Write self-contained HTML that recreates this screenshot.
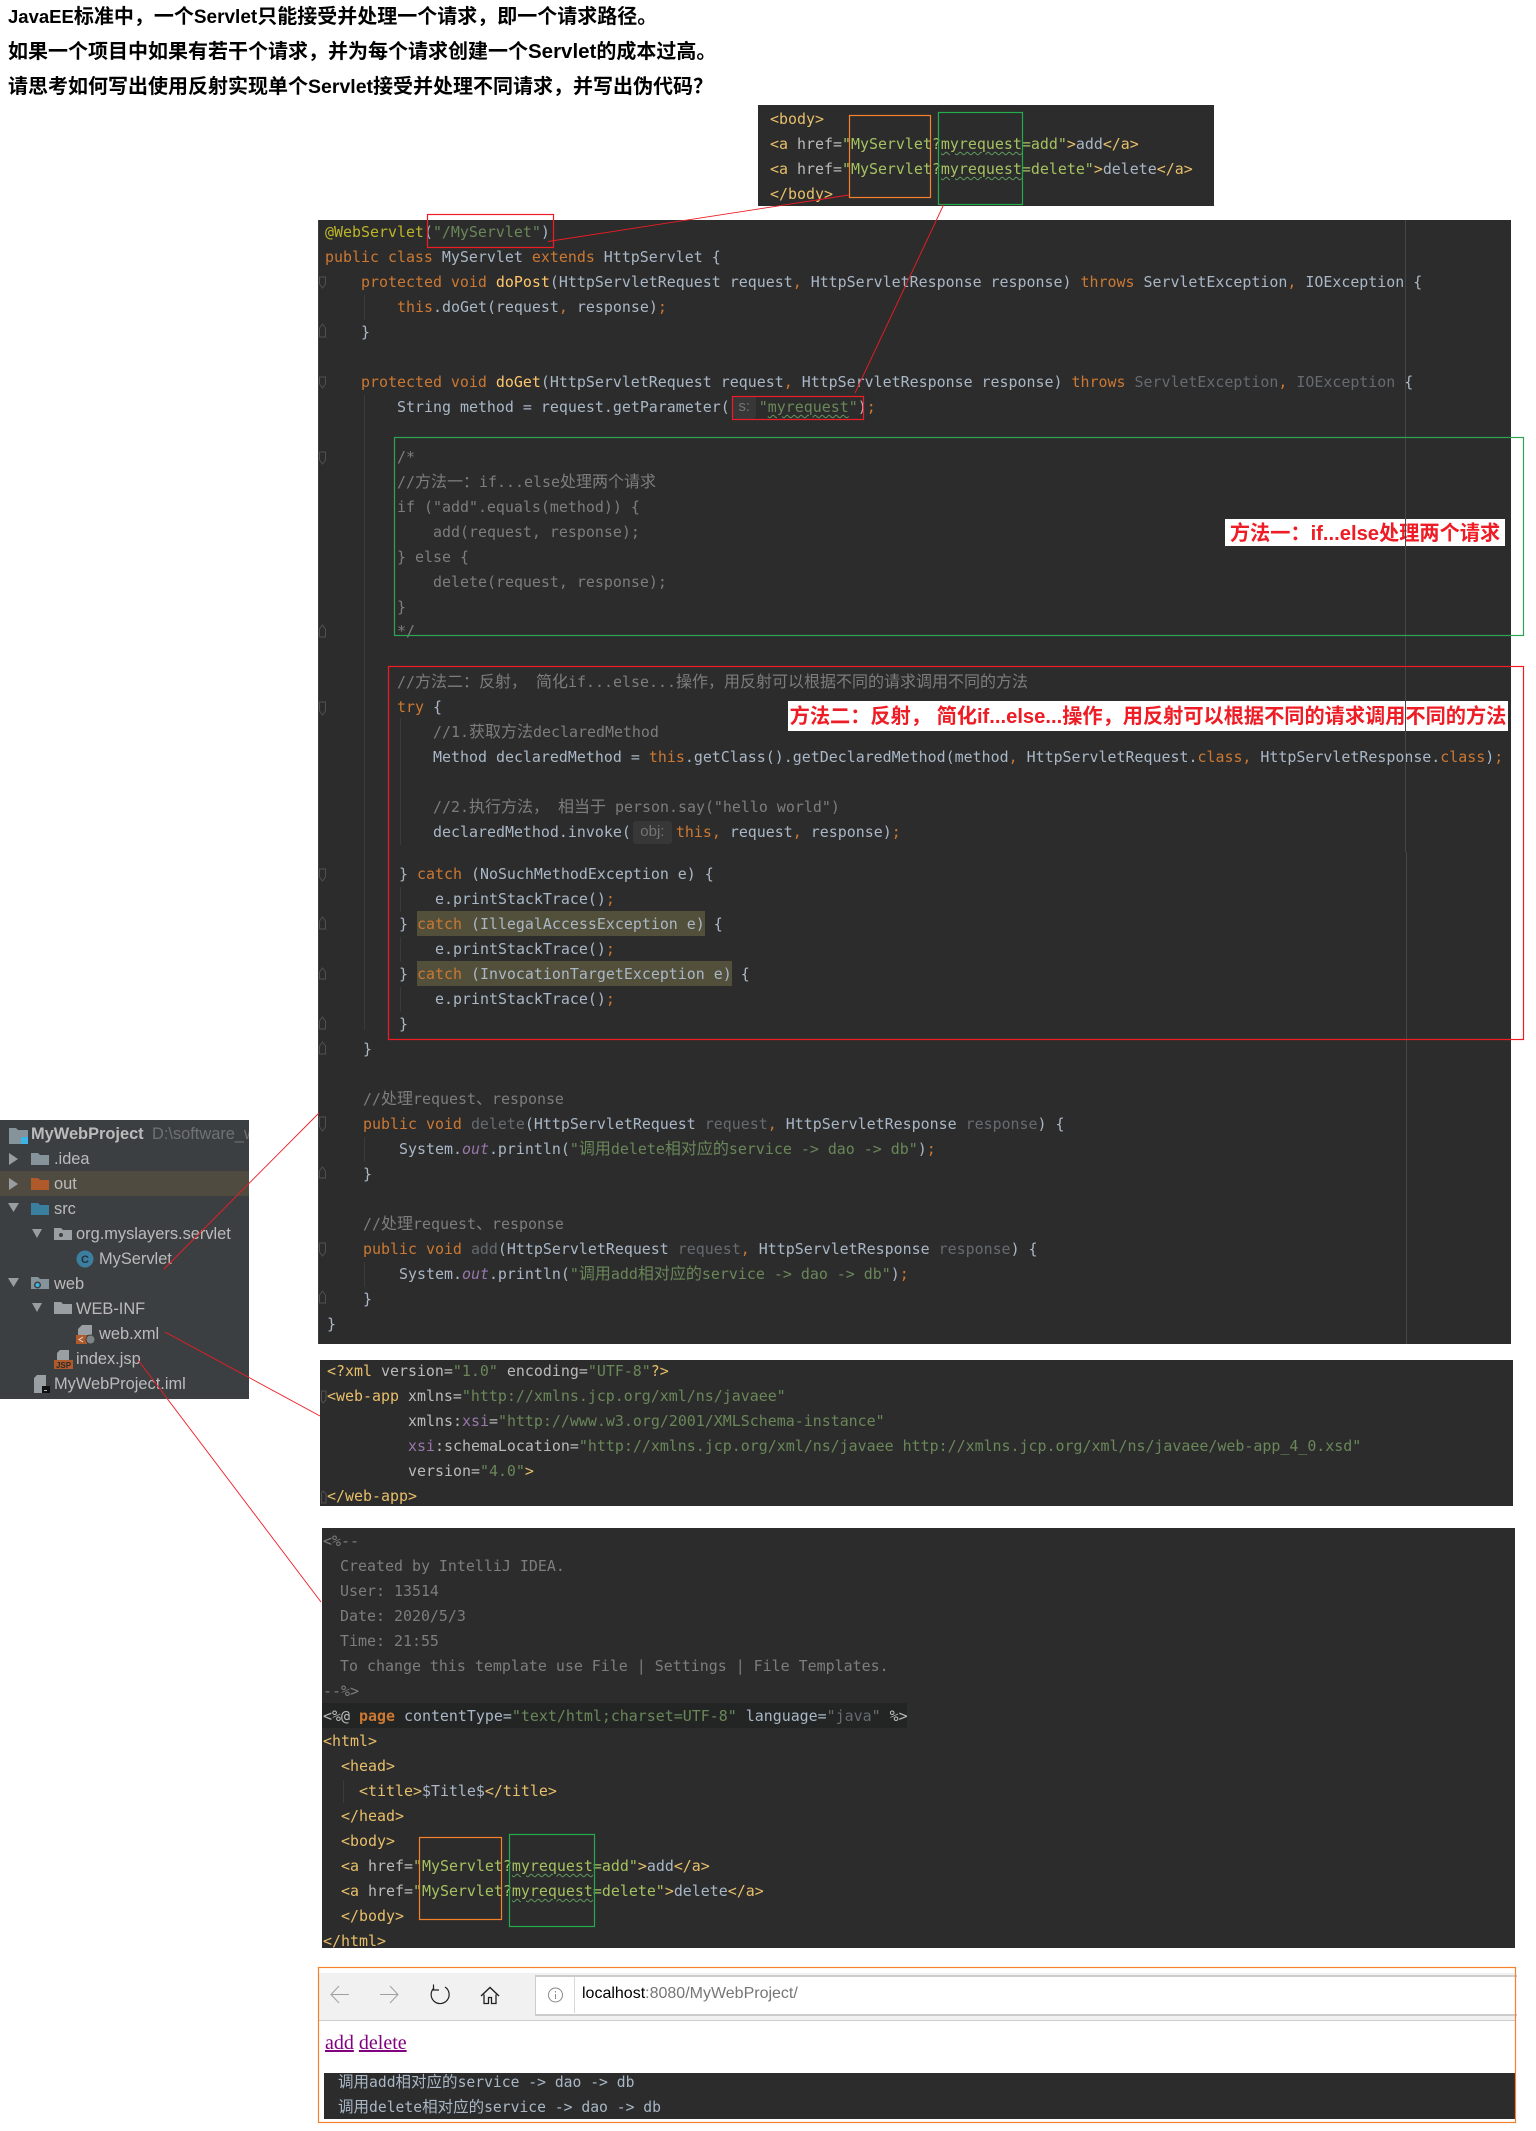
<!DOCTYPE html>
<html lang="zh"><head><meta charset="utf-8"><title>Servlet</title>
<style>
html,body{margin:0;padding:0;background:#fff}
body{position:relative;width:1536px;height:2131px;overflow:hidden}
.p{position:absolute;background:#2c2c2c}
.l{position:absolute;white-space:pre;height:25px;line-height:25px;font-family:"DejaVu Sans Mono","Noto Sans CJK SC",monospace;font-size:14.95px;color:#a9b7c6}
.c{font-family:"Noto Sans CJK SC",sans-serif;font-size:16px;line-height:0}
.k{color:#cc7832}.s{color:#6a8759}.a{color:#bbb529}.m{color:#ffc66d}.g,.g *{color:#7d7d7d}.u{color:#666b70}
.t{color:#e8bf6a}.b{color:#bababa}.v{color:#a5c261}.x{color:#9876aa}.i{font-style:italic;color:#9876aa}
.w{text-decoration:underline wavy #5f9a5f;text-decoration-thickness:.6px;text-underline-offset:1.5px}
.h{display:inline-block;box-sizing:border-box;height:23px;line-height:21px;background:#373737;border-radius:3px;color:#747474;font-family:"Liberation Sans",sans-serif;font-size:15px;text-align:center;vertical-align:top;margin:1px 3px 0 3px}
.hd{position:absolute;left:8px;white-space:pre;font:bold 20px/30px "Liberation Sans","Noto Sans CJK SC",sans-serif;color:#000}
.hd span{font-size:19px}
.lb{position:absolute;background:#fff;color:#ee1c25;font:bold 20.2px/28px "Liberation Sans","Noto Sans CJK SC",sans-serif;white-space:pre;text-align:center}
.r{position:absolute;left:0;white-space:pre;font:16.4px/25px "Liberation Sans",sans-serif;color:#bbb}
.hl{position:absolute;background:#524f3a}
</style></head><body>

<div class="hd" style="top:2px"><span style="font-size:18.5px">JavaEE</span>标准中，一个<span>Servlet</span>只能接受并处理一个请求，即一个请求路径。</div>
<div class="hd" style="top:37px">如果一个项目中如果有若干个请求，并为每个请求创建一个<span style="font-size:20.5px">Servlet</span>的成本过高。</div>
<div class="hd" style="top:72px">请思考如何写出使用反射实现单个<span style="font-size:19.5px">Servlet</span>接受并处理不同请求，并写出伪代码？</div>

<!-- top html panel -->
<div class="p" style="left:758px;top:105px;width:456px;height:101px"></div>
<div class="l t" style="left:770px;top:107px">&lt;body&gt;</div>
<div class="l" style="left:770px;top:132px"><span class="t">&lt;a</span> <span class="b">href=</span><span class="v">"MyServlet?<span class="w">myrequest</span>=add"</span><span class="t">&gt;</span>add<span class="t">&lt;/a&gt;</span></div>
<div class="l" style="left:770px;top:157px"><span class="t">&lt;a</span> <span class="b">href=</span><span class="v">"MyServlet?<span class="w">myrequest</span>=delete"</span><span class="t">&gt;</span>delete<span class="t">&lt;/a&gt;</span></div>
<div class="l t" style="left:770px;top:182px">&lt;/body&gt;</div>

<!-- main code panel -->
<div class="p" style="left:318px;top:220px;width:1193px;height:1124px"></div>
<div class="hl" style="left:417px;top:911px;width:288px;height:25px"></div>
<div class="hl" style="left:417px;top:961px;width:315px;height:25px"></div>

<div class="l" style="left:325px;top:220px"><span class="a">@WebServlet</span>(<span class="s">"/MyServlet"</span>)</div>
<div class="l" style="left:325px;top:245px"><span class="k">public class</span> MyServlet <span class="k">extends</span> HttpServlet {</div>
<div class="l" style="left:361px;top:270px"><span class="k">protected void</span> <span class="m">doPost</span>(HttpServletRequest request<span class="k">,</span> HttpServletResponse response) <span class="k">throws</span> ServletException<span class="k">,</span> IOException {</div>
<div class="l" style="left:397px;top:295px"><span class="k">this</span>.doGet(request<span class="k">,</span> response)<span class="k">;</span></div>
<div class="l" style="left:361px;top:320px">}</div>
<div class="l" style="left:361px;top:370px"><span class="k">protected void</span> <span class="m">doGet</span>(HttpServletRequest request<span class="k">,</span> HttpServletResponse response) <span class="k">throws</span> <span class="u">ServletException</span><span class="k">,</span> <span class="u">IOException</span> {</div>
<div class="l" style="left:397px;top:395px">String method = request.getParameter(<span class="h" style="width:23px">s:</span><span class="s">"<span class="w">myrequest</span>"</span>)<span class="k">;</span></div>

<div class="l g" style="left:397px;top:445px">/*</div>
<div class="l g" style="left:397px;top:470px">//<span class="c">方法一：</span>if...else<span class="c">处理两个请求</span></div>
<div class="l g" style="left:397px;top:495px">if ("add".equals(method)) {</div>
<div class="l g" style="left:433px;top:520px">add(request, response);</div>
<div class="l g" style="left:397px;top:545px">} else {</div>
<div class="l g" style="left:433px;top:570px">delete(request, response);</div>
<div class="l g" style="left:397px;top:595px">}</div>
<div class="l g" style="left:397px;top:619px">*/</div>

<div class="l g" style="left:397px;top:670px">//<span class="c">方法二：反射，</span> <span class="c">简化</span>if...else...<span class="c">操作，用反射可以根据不同的请求调用不同的方法</span></div>
<div class="l" style="left:397px;top:695px"><span class="k">try</span> {</div>
<div class="l g" style="left:433px;top:720px">//1.<span class="c">获取方法</span>declaredMethod</div>
<div class="l" style="left:433px;top:745px">Method declaredMethod = <span class="k">this</span>.getClass().getDeclaredMethod(method<span class="k">,</span> HttpServletRequest.<span class="k">class,</span> HttpServletResponse.<span class="k">class</span>)<span class="k">;</span></div>
<div class="l g" style="left:433px;top:795px">//2.<span class="c">执行方法，</span> <span class="c">相当于</span> person.say("hello world")</div>
<div class="l" style="left:433px;top:820px">declaredMethod.invoke(<span class="h" style="width:39px;margin:1px 4px 0 2px">obj:</span><span class="k">this,</span> request<span class="k">,</span> response)<span class="k">;</span></div>

<div class="l" style="left:399px;top:862px">} <span class="k">catch</span> (NoSuchMethodException e) {</div>
<div class="l" style="left:435px;top:887px">e.printStackTrace()<span class="k">;</span></div>
<div class="l" style="left:399px;top:912px">} <span class="k">catch</span> (IllegalAccessException e) {</div>
<div class="l" style="left:435px;top:937px">e.printStackTrace()<span class="k">;</span></div>
<div class="l" style="left:399px;top:962px">} <span class="k">catch</span> (InvocationTargetException e) {</div>
<div class="l" style="left:435px;top:987px">e.printStackTrace()<span class="k">;</span></div>
<div class="l" style="left:399px;top:1012px">}</div>
<div class="l" style="left:363px;top:1037px">}</div>

<div class="l g" style="left:363px;top:1087px">//<span class="c">处理</span>request<span class="c">、</span>response</div>
<div class="l" style="left:363px;top:1112px"><span class="k">public void</span> <span class="u">delete</span>(HttpServletRequest <span class="u">request</span><span class="k">,</span> HttpServletResponse <span class="u">response</span>) {</div>
<div class="l" style="left:399px;top:1137px">System.<span class="i">out</span>.println(<span class="s">"<span class="c">调用</span>delete<span class="c">相对应的</span>service -&gt; dao -&gt; db"</span>)<span class="k">;</span></div>
<div class="l" style="left:363px;top:1162px">}</div>
<div class="l g" style="left:363px;top:1212px">//<span class="c">处理</span>request<span class="c">、</span>response</div>
<div class="l" style="left:363px;top:1237px"><span class="k">public void</span> <span class="u">add</span>(HttpServletRequest <span class="u">request</span><span class="k">,</span> HttpServletResponse <span class="u">response</span>) {</div>
<div class="l" style="left:399px;top:1262px">System.<span class="i">out</span>.println(<span class="s">"<span class="c">调用</span>add<span class="c">相对应的</span>service -&gt; dao -&gt; db"</span>)<span class="k">;</span></div>
<div class="l" style="left:363px;top:1287px">}</div>
<div class="l" style="left:327px;top:1312px">}</div>

<div class="lb" style="left:1225px;top:519px;width:280px;height:27px;line-height:30px">方法一：if...else处理两个请求</div>
<div class="lb" style="left:788px;top:701px;width:720px;height:30px;line-height:32px">方法二：反射， 简化if...else...操作，用反射可以根据不同的请求调用不同的方法</div>

<!-- xml panel -->
<div class="p" style="left:320px;top:1360px;width:1193px;height:146px"></div>
<div class="l" style="left:327px;top:1359px"><span class="t">&lt;?xml</span> <span class="b">version=</span><span class="s">"1.0"</span> <span class="b">encoding=</span><span class="s">"UTF-8"</span><span class="t">?&gt;</span></div>
<div class="l" style="left:327px;top:1384px"><span class="t">&lt;web-app</span> <span class="b">xmlns=</span><span class="s">"http://xmlns.jcp.org/xml/ns/javaee"</span></div>
<div class="l" style="left:408px;top:1409px"><span class="b">xmlns:</span><span class="x">xsi</span><span class="b">=</span><span class="s">"http://www.w3.org/2001/XMLSchema-instance"</span></div>
<div class="l" style="left:408px;top:1434px"><span class="x">xsi</span><span class="b">:schemaLocation=</span><span class="s">"http://xmlns.jcp.org/xml/ns/javaee http://xmlns.jcp.org/xml/ns/javaee/web-app_4_0.xsd"</span></div>
<div class="l" style="left:408px;top:1459px"><span class="b">version=</span><span class="s">"4.0"</span><span class="t">&gt;</span></div>
<div class="l t" style="left:327px;top:1484px">&lt;/web-app&gt;</div>

<!-- jsp panel -->
<div class="p" style="left:322px;top:1528px;width:1193px;height:420px"></div>
<div style="position:absolute;left:322px;top:1703px;width:585px;height:25px;background:#232525"></div>
<div class="l g" style="left:323px;top:1529px">&lt;%--</div>
<div class="l g" style="left:340px;top:1554px">Created by IntelliJ IDEA.</div>
<div class="l g" style="left:340px;top:1579px">User: 13514</div>
<div class="l g" style="left:340px;top:1604px">Date: 2020/5/3</div>
<div class="l g" style="left:340px;top:1629px">Time: 21:55</div>
<div class="l g" style="left:340px;top:1654px">To change this template use File | Settings | File Templates.</div>
<div class="l g" style="left:323px;top:1679px">--%&gt;</div>
<div class="l" style="left:323px;top:1704px"><span class="b">&lt;%@</span> <b class="k">page</b> contentType=<span class="s">"text/html;charset=UTF-8"</span> language=<span class="u">"java"</span> <span class="b">%&gt;</span></div>
<div class="l t" style="left:323px;top:1729px">&lt;html&gt;</div>
<div class="l t" style="left:341px;top:1754px">&lt;head&gt;</div>
<div class="l" style="left:359px;top:1779px"><span class="t">&lt;title&gt;</span>$Title$<span class="t">&lt;/title&gt;</span></div>
<div class="l t" style="left:341px;top:1804px">&lt;/head&gt;</div>
<div class="l t" style="left:341px;top:1829px">&lt;body&gt;</div>
<div class="l" style="left:341px;top:1854px"><span class="t">&lt;a</span> <span class="b">href=</span><span class="v">"MyServlet?<span class="w">myrequest</span>=add"</span><span class="t">&gt;</span>add<span class="t">&lt;/a&gt;</span></div>
<div class="l" style="left:341px;top:1879px"><span class="t">&lt;a</span> <span class="b">href=</span><span class="v">"MyServlet?<span class="w">myrequest</span>=delete"</span><span class="t">&gt;</span>delete<span class="t">&lt;/a&gt;</span></div>
<div class="l t" style="left:341px;top:1904px">&lt;/body&gt;</div>
<div class="l t" style="left:323px;top:1929px">&lt;/html&gt;</div>

<!-- browser -->
<div style="position:absolute;left:319px;top:1973px;width:1197px;height:47px;background:#f1f1f1;border-bottom:1px solid #ccc"></div>
<div style="position:absolute;left:535px;top:1975px;width:981px;height:37px;background:#fff;border:1px solid #ccc;border-right:0;border-width:2px 0 2px 1px"></div>
<div style="position:absolute;left:574px;top:1977px;width:1px;height:36px;background:#d8d8d8"></div>
<div style="position:absolute;left:582px;top:1982px;white-space:pre;font:16px/24px 'Liberation Sans',sans-serif;color:#767676"><span style="color:#000">localhost</span>:8080/MyWebProject/</div>
<div style="position:absolute;left:325px;top:2031px;white-space:pre;font:20px/24px 'Liberation Serif',serif;color:#800080"><span style="text-decoration:underline">add</span> <span style="text-decoration:underline">delete</span></div>
<div class="p" style="left:324px;top:2073px;width:1191px;height:46px"></div>
<div class="l" style="left:338px;top:2070px;font-size:14.7px"><span class="c" style="font-size:15.5px">调用</span>add<span class="c" style="font-size:15.5px">相对应的</span>service -&gt; dao -&gt; db</div>
<div class="l" style="left:338px;top:2095px;font-size:14.7px"><span class="c" style="font-size:15.5px">调用</span>delete<span class="c" style="font-size:15.5px">相对应的</span>service -&gt; dao -&gt; db</div>

<!-- project tree -->
<div style="position:absolute;left:0;top:1120px;width:249px;height:279px;background:#3c3f41;overflow:hidden">
<div style="position:absolute;left:0;top:51px;width:249px;height:25px;background:#4f4b41"></div>
<div class="r" style="left:31px;top:2px;color:#bbb"><b>MyWebProject</b></div>
<div class="r" style="left:152px;top:2px;color:#6f7274">D:\software_workspace</div>
<div class="r" style="left:54px;top:27px">.idea</div>
<div class="r" style="left:54px;top:52px">out</div>
<div class="r" style="left:54px;top:77px">src</div>
<div class="r" style="left:76px;top:102px">org.myslayers.servlet</div>
<div class="r" style="left:99px;top:127px">MyServlet</div>
<div class="r" style="left:54px;top:152px">web</div>
<div class="r" style="left:76px;top:177px">WEB-INF</div>
<div class="r" style="left:99px;top:202px">web.xml</div>
<div class="r" style="left:76px;top:227px">index.jsp</div>
<div class="r" style="left:54px;top:252px">MyWebProject.iml</div>
</div>

<!-- overlay: icons, guides, boxes, lines -->
<svg style="position:absolute;left:0;top:0" width="1536" height="2131" viewBox="0 0 1536 2131" fill="none" shape-rendering="auto">
<!-- margin + guides -->
<path d="M1405.5 220V852M1406.5 852V1344" stroke="#464646"/>
<path d="M364.5 295V320M364.5 395V1030M364.5 1137V1162M364.5 1262V1287M400.5 718V845M400.5 887V912M400.5 937V962M400.5 987V1012M343.5 1780V1803" stroke="#3a3a3a"/>
<path d="M318.5 220V1344" stroke="#3d3d3d"/>
<!-- fold markers -->
<g stroke="#505050">
<path d="M319.5 277H325.5V284L322.5 288L319.5 284Z"/>
<path d="M319.5 337H325.5V328L322.5 324L319.5 328Z"/>
<path d="M319.5 377H325.5V384L322.5 388L319.5 384Z"/>
<path d="M319.5 452H325.5V460L322.5 464L319.5 460Z"/>
<path d="M319.5 637H325.5V629L322.5 625L319.5 629Z"/>
<path d="M319.5 702H325.5V711L322.5 715L319.5 711Z"/>
<path d="M319.5 869H325.5V877L322.5 881L319.5 877Z"/>
<path d="M319.5 929H325.5V921L322.5 917L319.5 921Z"/>
<path d="M319.5 979H325.5V972L322.5 968L319.5 972Z"/>
<path d="M319.5 1029H325.5V1021L322.5 1017L319.5 1021Z"/>
<path d="M319.5 1054H325.5V1046L322.5 1042L319.5 1046Z"/>
<path d="M319.5 1117H325.5V1127L322.5 1131L319.5 1127Z"/>
<path d="M319.5 1178H325.5V1171L322.5 1167L319.5 1171Z"/>
<path d="M319.5 1243H325.5V1252L322.5 1256L319.5 1252Z"/>
<path d="M319.5 1303H325.5V1295L322.5 1291L319.5 1295Z"/>
<path d="M321.5 1391H326V1400L323 1403L321.5 1401Z"/>
<path d="M321.5 1503H326V1494L323 1491L321.5 1493Z"/>
</g>

<!-- tree icons -->
<path d="M9 1128H16L18 1130H28V1137H21V1144H9Z" fill="#87939a"/><rect x="21" y="1137" width="7" height="7" fill="#3cb4e6"/>
<g fill="#9a9d9f">
<path d="M9 1153L18 1159L9 1165Z"/><path d="M9 1178L18 1184L9 1190Z"/>
<path d="M8 1203H19L13.5 1212Z"/><path d="M32 1229H42L37 1238Z"/>
<path d="M8 1278H19L13.5 1287Z"/><path d="M32 1303H42L37 1312Z"/>
</g>
<path d="M31 1153H38L40 1155H49V1165H31Z" fill="#87939a"/>
<path d="M31 1178H38L40 1180H49V1190H31Z" fill="#b0592b"/>
<path d="M31 1203H38L40 1205H49V1215H31Z" fill="#3b7f9f"/>
<path d="M54 1228H61L63 1230H72V1240H54Z" fill="#9a9fa3"/><circle cx="61" cy="1235" r="2" fill="#3c3f41"/>
<path d="M31 1277H38L40 1279H49V1289H31Z" fill="#87939a"/><circle cx="37.5" cy="1285" r="3.5" fill="#3c3f41"/><circle cx="37.5" cy="1285" r="2" fill="#3cb4e6"/>
<path d="M54 1302H61L63 1304H72V1314H54Z" fill="#9a9fa3"/>
<circle cx="85" cy="1259" r="8.5" fill="#3c7ea0"/><text x="85" y="1263" text-anchor="middle" font-family="Liberation Sans,sans-serif" font-weight="bold" font-size="11" fill="#23303a">C</text>
<path d="M82 1325H92V1335H78V1329Z" fill="#9a9fa3"/><rect x="76" y="1335" width="11" height="9" fill="#b0592b"/><path d="M83 1337L79 1339.5L83 1342" stroke="#ddd"/><circle cx="90.5" cy="1339.5" r="4.5" fill="#7d8488" stroke="#3c3f41"/>
<path d="M60 1350H69V1360H57V1353Z" fill="#9a9fa3"/><rect x="54" y="1360" width="19" height="9" fill="#b0592b"/><text x="63.5" y="1368" text-anchor="middle" font-family="Liberation Sans,sans-serif" font-weight="bold" font-size="8" fill="#2b2b2b">JSP</text>
<path d="M37 1375H46V1386H42V1393H34V1378Z" fill="#9a9fa3"/><rect x="42" y="1386" width="8" height="7" fill="#111"/><rect x="44" y="1390" width="3" height="1" fill="#bbb"/>

<!-- browser icons -->
<path d="M349 1994.5H331M339 1986L331 1994.5L339 2003M380 1994.5H398M390 1986L398 1994.5L390 2003" stroke="#a0a0a0"/>
<path d="M434 1988A9 9 0 1 0 445 1987" stroke="#222" stroke-width="1.2"/><path d="M433.5 1984.5V1990H439" stroke="#222" stroke-width="1.2"/>
<path d="M481 1996L490 1987.5L499 1996" stroke="#222" stroke-width="1.4"/><path d="M484 1994.5V2003.5H488.5V1997.5H491.5V2003.5H496V1994.5" stroke="#222" stroke-width="1.3"/>
<circle cx="555.5" cy="1995" r="7" stroke="#888"/><path d="M555.5 1994V1999M555.5 1991V1992.5" stroke="#888"/>

<!-- boxes -->
<g stroke-width="1.2">
<rect x="849.5" y="115.5" width="81" height="82" stroke="#f5812a"/>
<rect x="938.5" y="112.5" width="84" height="92" stroke="#22ac4c"/>
<rect x="427.5" y="214.5" width="126" height="33" stroke="#ee1c25"/>
<rect x="732.5" y="396.5" width="131" height="23" stroke="#ee1c25"/>
<rect x="394.5" y="437.5" width="1129" height="198" stroke="#2da552"/>
<rect x="388.5" y="666.5" width="1135" height="373" stroke="#ee1c25"/>
<rect x="419.5" y="1837.5" width="82" height="82" stroke="#f5812a"/>
<rect x="509.5" y="1834.5" width="85" height="92" stroke="#22ac4c"/>
<rect x="318.5" y="1967.5" width="1197" height="155" stroke="#f5812a"/>
</g>
<!-- connector lines -->
<g stroke="#ee1c25" stroke-width=".9">
<path d="M548 241.5L849 195"/>
<path d="M944 204L855 393"/>
<path d="M164 1269L319 1113"/>
<path d="M165 1332L320 1416"/>
<path d="M138 1360L321 1602"/>
</g>
</svg>
</body></html>
